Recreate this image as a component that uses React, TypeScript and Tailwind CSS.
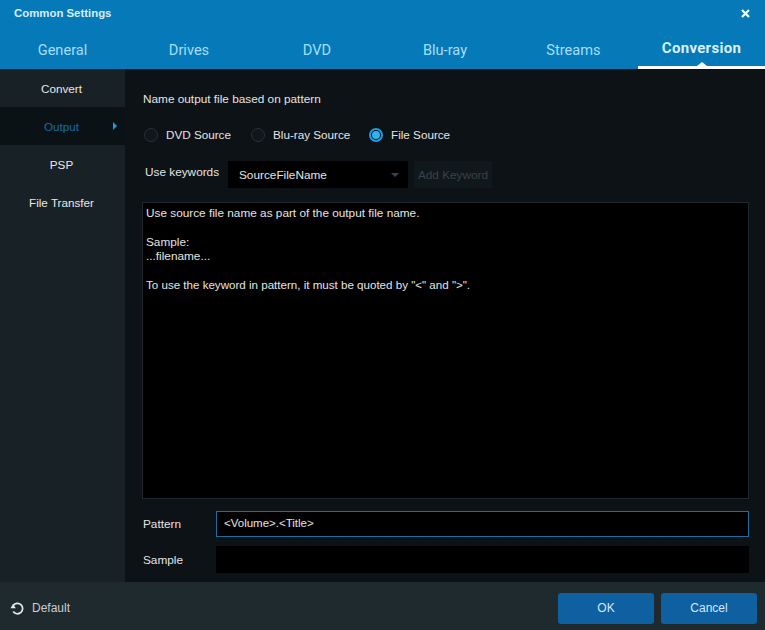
import React from "react";

const tabs = ["General", "Drives", "DVD", "Blu-ray", "Streams", "Conversion"];
const side = ["Convert", "Output", "PSP", "File Transfer"];

function Radio({ label, on, cls }: { label: string; on?: boolean; cls: string }) {
  return (
    <div className={`flex items-center ${cls}`}>
      {on ? (
        <span className="w-[14px] h-[14px] rounded-full border-2 border-[#1d9be0] flex items-center justify-center mr-[8px]">
          <span className="w-[8px] h-[8px] rounded-full bg-[#2fb1f5]" />
        </span>
      ) : (
        <span className="w-[14px] h-[14px] rounded-full border border-[#263236] bg-[#10171a] mr-[8px]" />
      )}
      <span className="text-[11.7px] text-[#e4e4e4]">{label}</span>
    </div>
  );
}

export default function App() {
  return (
    <div className="w-[765px] h-[630px] flex flex-col overflow-hidden bg-[#0c1216] font-['Liberation_Sans',Arial,sans-serif]">
      <header className="h-[69px] bg-[#0679b8] flex flex-col shrink-0">
        <div className="h-[27px] flex items-center justify-between pl-[14px] pr-[15px]">
          <span className="text-[11.4px] font-bold text-[#d5eefa]">Common Settings</span>
          <svg width="9" height="9" viewBox="0 0 9 9" className="block">
            <path d="M1 1 L8 8 M8 1 L1 8" stroke="#fff" strokeWidth="2.2" />
          </svg>
        </div>
        <nav className="flex-1 grid grid-cols-[125px_128px_128px_128px_129px_127px] font-['Roboto',sans-serif]">
          {tabs.map((t) => {
            const active = t === "Conversion";
            return (
              <div
                key={t}
                className={`relative flex items-center justify-center ${
                  active
                    ? "text-[15px] tracking-[0.3px] font-bold text-[#d9f1fc] border-b-[3px] border-white pt-[3px]"
                    : "text-[14.6px] text-[#a5def8] pt-[6px]"
                }`}
              >
                {t}
                {active && (
                  <span className="absolute bottom-0 left-1/2 -translate-x-1/2 w-0 h-0 border-x-[5px] border-x-transparent border-b-[4px] border-b-white" />
                )}
              </div>
            );
          })}
        </nav>
      </header>

      <div className="flex-1 flex min-h-0">
        <aside className="w-[125px] shrink-0 bg-[#182125] flex flex-col">
          {side.map((s) => {
            const active = s === "Output";
            return (
              <div
                key={s}
                className={`relative h-[38px] shrink-0 flex items-center justify-center pt-[2px] pr-[2px] text-[11.7px] ${
                  active ? "bg-[#0b1216] text-[#146ba0]" : "text-[#e8e8e8]"
                }`}
              >
                {s}
                {active && (
                  <span className="absolute right-[8px] top-1/2 -translate-y-1/2 w-0 h-0 border-y-[4px] border-y-transparent border-l-[4px] border-l-[#1d9be0]" />
                )}
              </div>
            );
          })}
        </aside>

        <main className="flex-1 flex flex-col pl-[17px] pr-[16px] pt-[23px] text-[11.8px] text-[#e4e4e4]">
          <div className="h-[14px] leading-[14px] pl-[1px]">Name output file based on pattern</div>
          <div className="flex items-center h-[16px] mt-[21px] pl-[2px]">
            <Radio label="DVD Source" cls="w-[107px]" />
            <Radio label="Blu-ray Source" cls="w-[118px]" />
            <Radio label="File Source" on cls="" />
          </div>
          <div className="flex items-center h-[27px] mt-[18px]">
            <span className="w-[86px] pl-[3px] pb-[3px]">Use keywords</span>
            <div className="w-[180px] h-[27px] bg-black flex items-center justify-between pl-[11px] pr-[9px]">
              <span className="pt-[2px]">SourceFileName</span>
              <span className="w-0 h-0 border-x-[4px] border-x-transparent border-t-[4px] border-t-[#3b4448]" />
            </div>
            <div className="w-[78px] h-[27px] ml-[6px] pt-[2px] bg-[#10181c] flex items-center justify-center text-[#3a4246]">
              Add Keyword
            </div>
          </div>
          <div className="w-[607px] h-[297px] mt-[14px] bg-black border border-[#1f282c] pl-[3px] pt-[3px] leading-[14px]">
            <p>Use source file name as part of the output file name.</p>
            <p className="mt-[15px]">Sample:</p>
            <p>...filename...</p>
            <p className="mt-[15px] text-[11.58px]">To use the keyword in pattern, it must be quoted by "&lt;" and "&gt;".</p>
          </div>
          <div className="flex items-center h-[26px] mt-[12px]">
            <span className="w-[74px] pl-[1px] pt-[2px]">Pattern</span>
            <div className="w-[533px] h-[26px] bg-black border border-[#1f6ea3] flex items-center pl-[7px] text-[11.5px]">
              &lt;Volume&gt;.&lt;Title&gt;
            </div>
          </div>
          <div className="flex items-center h-[27px] mt-[9px]">
            <span className="w-[74px] pl-[1px] pt-[2px]">Sample</span>
            <div className="w-[533px] h-[27px] bg-black" />
          </div>
        </main>
      </div>

      <footer className="h-[48px] shrink-0 bg-[#1e2a2d] flex items-center pt-[4px] pl-[10px] pr-[8px]">
        <svg width="15" height="15" viewBox="0 0 15 15" fill="none" className="block">
          <path d="M3.2 4.6 A5.2 5.2 0 1 1 3.2 10.6" stroke="#e8e8e8" strokeWidth="1.7" />
          <path d="M0.5 7.2 L5.8 7.2 L3 3 Z" fill="#e8e8e8" />
        </svg>
        <span className="ml-[7px] text-[12px] text-[#c9ccd4]">Default</span>
        <div className="ml-auto flex gap-[7px]">
          <button className="w-[96px] h-[31px] rounded-[3px] bg-[#0f60a0] text-[12px] text-[#cfe9f8]">OK</button>
          <button className="w-[96px] h-[31px] rounded-[3px] bg-[#0f60a0] text-[12px] text-[#cfe9f8]">Cancel</button>
        </div>
      </footer>
    </div>
  );
}
